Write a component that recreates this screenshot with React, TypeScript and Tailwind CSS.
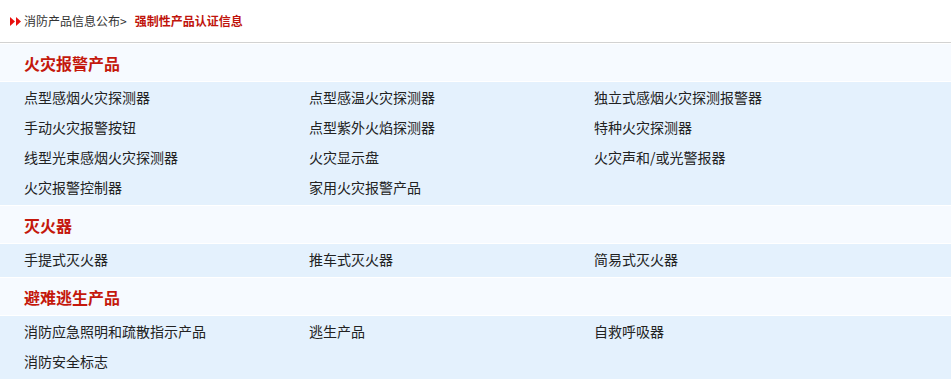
const sections = [
  {
    title: '火灾报警产品',
    items: [
      '点型感烟火灾探测器',
      '点型感温火灾探测器',
      '独立式感烟火灾探测报警器',
      '手动火灾报警按钮',
      '点型紫外火焰探测器',
      '特种火灾探测器',
      '线型光束感烟火灾探测器',
      '火灾显示盘',
      '火灾声和/或光警报器',
      '火灾报警控制器',
      '家用火灾报警产品',
    ],
  },
  {
    title: '灭火器',
    items: ['手提式灭火器', '推车式灭火器', '简易式灭火器'],
  },
  {
    title: '避难逃生产品',
    items: ['消防应急照明和疏散指示产品', '逃生产品', '自救呼吸器', '消防安全标志'],
  },
];

const font = { fontFamily: '"Microsoft YaHei", "Noto Sans CJK SC", sans-serif' };

export default function App() {
  return (
    <div className="w-[951px] h-[380px] overflow-hidden bg-white" style={font}>
      {/* Breadcrumb */}
      <div className="h-[43px] flex items-center pl-[10px] border-b border-[#d2d2d2] text-[12px]">
        <svg width="11" height="9" viewBox="0 0 11 9" className="mr-[3px]">
          <path d="M0 0 L5 4.5 L0 9 Z" fill="#e8100e" />
          <path d="M6 0 L11 4.5 L6 9 Z" fill="#e8100e" />
        </svg>
        <span className="text-[#333]">消防产品信息公布&gt;</span>
        <span className="ml-[8px] font-semibold text-[#c0140c]">强制性产品认证信息</span>
      </div>

      {sections.map((s) => (
        <div key={s.title} className="mt-px">
          <div className="h-[37px] flex items-center pl-6 bg-[#f6faff] text-[16px] font-semibold text-[#c4180c]">
            {s.title}
          </div>
          <div className="mt-px bg-[#e4f1fd] pl-6 pb-[3px] grid grid-cols-[285px_285px_285px] text-[14px] text-[#222]">
            {s.items.map((it) => (
              <div key={it} className="h-[30px] flex items-center whitespace-nowrap">
                {it}
              </div>
            ))}
          </div>
        </div>
      ))}
    </div>
  );
}
